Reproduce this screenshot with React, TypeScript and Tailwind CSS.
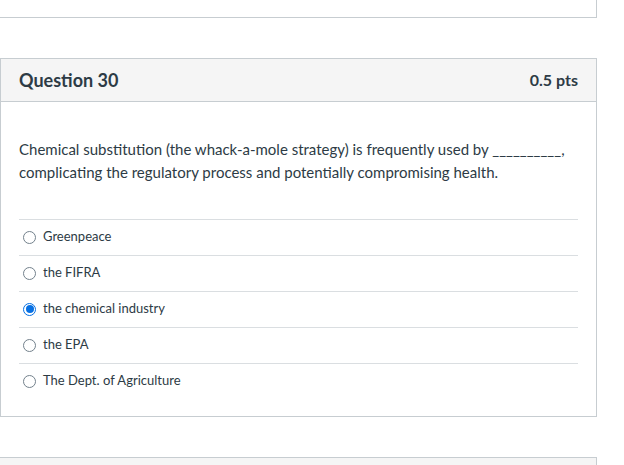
import React from 'react';

const answers = [
  { id: 'a1', label: 'Greenpeace', checked: false },
  { id: 'a2', label: 'the FIFRA', checked: false },
  { id: 'a3', label: 'the chemical industry', checked: true },
  { id: 'a4', label: 'the EPA', checked: false },
  { id: 'a5', label: 'The Dept. of Agriculture', checked: false },
];

function Radio({ checked }: { checked: boolean }) {
  if (checked) {
    return (
      <span className="w-[13px] h-[13px] rounded-full border-[1.5px] border-[#0770e3] flex items-center justify-center shrink-0">
        <span className="w-[8px] h-[8px] rounded-full bg-[#0770e3]" />
      </span>
    );
  }
  return <span className="w-[13px] h-[13px] rounded-full border border-[#73818c] bg-white shrink-0" />;
}

export default function App() {
  return (
    <div className="w-[624px] h-[465px] overflow-hidden bg-white font-['Lato','Noto_Sans',sans-serif] text-[#2d3b45]">
      {/* previous question (cut off) */}
      <div className="w-[597px] h-[18px] border-r border-b border-[#c7cdd1]" />

      <div className="h-[40px]" />

      {/* question card */}
      <div className="w-[597px] border border-[#c7cdd1]">
        <div className="h-[43px] bg-[#f5f5f5] border-b border-[#c7cdd1] flex items-center justify-between pl-[18px] pr-[18px]">
          <span className="text-[18px] font-bold">Question 30</span>
          <span className="text-[16px] font-bold">0.5 pts</span>
        </div>
        <div className="px-[18px] pt-[36px] pb-[17px]">
          <p className="text-[15px] leading-[23px]">
            Chemical substitution (the whack-a-mole strategy) is frequently used by __________,
            <br />
            complicating the regulatory process and potentially compromising health.
          </p>
          <div className="mt-[35px]">
            {answers.map((a) => (
              <div key={a.id} className="h-[36px] border-t border-[#dadee1] flex items-center gap-[7px] pl-[4px] pb-[1px]">
                <Radio checked={a.checked} />
                <span className="text-[13px]">{a.label}</span>
              </div>
            ))}
          </div>
        </div>
      </div>

      <div className="h-[40px]" />

      {/* next question (cut off) */}
      <div className="w-[597px] h-[20px] border-t border-r border-[#c7cdd1] bg-[#f5f5f5]" />
    </div>
  );
}
